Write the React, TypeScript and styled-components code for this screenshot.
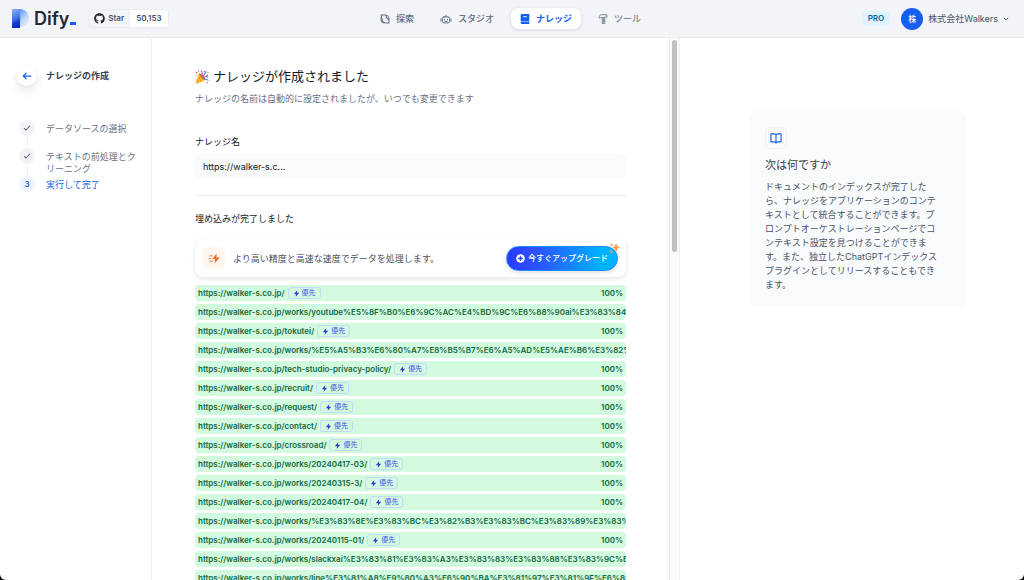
import React from "react";
import styled, { createGlobalStyle } from "styled-components";
import { FaGithub } from "react-icons/fa";

const GlobalStyle = createGlobalStyle`
  *, *::before, *::after { box-sizing: border-box; }
  body {
    margin: 0;
    background: #101010;
    font-family: Inter, "Noto Sans CJK JP", sans-serif;
    font-size: 9px;
    line-height: 13px;
    color: #344054;
  }
  button, input { font: inherit; color: inherit; }
  h1, h2, p, ol, ul { margin: 0; padding: 0; }
  ol, ul { list-style: none; }
  svg { display: block; flex: none; }
`;

const Page = styled.div`
  display: flex;
  flex-direction: column;
  height: 100vh;
  overflow: hidden;
  background: #fff;
  border-radius: 0 0 6px 6px;
`;

const Header = styled.header`
  display: grid;
  grid-template-columns: 1fr auto 1fr;
  align-items: center;
  flex: none;
  height: 38px;
  padding: 0 15px 0 12px;
  background: #f2f4f7;
  border-bottom: 1px solid #eaecf0;
`;

const HeaderSide = styled.div<{ $end?: boolean }>`
  display: flex;
  align-items: center;
  justify-content: ${(p) => (p.$end ? "flex-end" : "flex-start")};
`;

const Brand = styled.a`
  display: flex;
  align-items: center;
  gap: 5px;
  margin-right: 12px;
  color: #1d2939;
  font-size: 18px;
  font-weight: 600;
  line-height: 20px;
  text-decoration: none;
`;

const Wordmark = styled.span`
  display: flex;
  align-items: baseline;
  gap: 1px;
`;

const Underscore = styled.span`
  width: 6px;
  height: 3px;
  background: #155eef;
`;

const StarBadge = styled.a`
  display: flex;
  height: 19px;
  overflow: hidden;
  border: 1px solid #eaecf0;
  border-radius: 4px;
  color: #475467;
  font-size: 8px;
  font-weight: 600;
  line-height: 17px;
  text-decoration: none;
`;

const StarLabel = styled.span`
  display: flex;
  align-items: center;
  gap: 3px;
  padding: 0 6px 0 5px;
`;

const StarCount = styled.span`
  padding: 0 6px;
  background: #fff;
`;

const Nav = styled.nav`
  display: flex;
  gap: 8px;
`;

const NavLink = styled.a<{ $active?: boolean; $muted?: boolean }>`
  display: flex;
  align-items: center;
  gap: 6px;
  height: 21px;
  padding: 0 9px;
  border-radius: 8px;
  font-weight: ${(p) => (p.$active ? 700 : 500)};
  color: ${(p) => (p.$active ? "#155eef" : p.$muted ? "#7d8797" : "#667085")};
  background: ${(p) => (p.$active ? "#fff" : "transparent")};
  box-shadow: ${(p) => (p.$active ? "0 1px 4px rgba(16, 24, 40, 0.12)" : "none")};
  text-decoration: none;
`;

const Plan = styled.span`
  padding: 1px 6px;
  margin-right: 11px;
  border-radius: 4px;
  background: #e0f2fe;
  color: #026aa2;
  font-size: 8px;
  font-weight: 600;
`;

const Account = styled.button`
  display: flex;
  align-items: center;
  gap: 5px;
  padding: 0;
  border: 0;
  background: none;
  color: #475467;
`;

const Avatar = styled.span`
  width: 22px;
  height: 22px;
  border-radius: 50%;
  background: #155eef;
  color: #fff;
  font-size: 8px;
  font-weight: 500;
  line-height: 22px;
`;

const Body = styled.div`
  display: flex;
  flex: 1;
  min-height: 0;
`;

const Sidebar = styled.aside`
  flex: none;
  width: 152px;
  padding: 27px 12px 0 16px;
  border-right: 1px solid #eaecf0;
`;

const SidebarTitle = styled.div`
  display: flex;
  align-items: center;
  gap: 9px;
  margin-bottom: 34px;
  font-weight: 700;
`;

const BackButton = styled.button`
  display: grid;
  place-items: center;
  width: 21px;
  height: 21px;
  padding: 0;
  border: 0;
  border-radius: 50%;
  background: #fff;
  box-shadow: 0 6px 10px rgba(16, 24, 40, 0.08), 0 1px 3px rgba(16, 24, 40, 0.06);
`;

const StepList = styled.ol`
  display: flex;
  flex-direction: column;
`;

const Step = styled.li<{ $active?: boolean }>`
  display: flex;
  gap: 11px;
  min-height: 28px;
  padding-left: 3px;
  line-height: 12px;
  color: ${(p) => (p.$active ? "#155eef" : "#667085")};
`;

const StepRail = styled.span`
  display: flex;
  flex-direction: column;
  align-items: center;
  gap: 2px;
  padding-bottom: 2px;
`;

const StepMark = styled.span<{ $active?: boolean }>`
  display: grid;
  place-items: center;
  flex: none;
  width: 16px;
  height: 16px;
  border-radius: 50%;
  background: ${(p) => (p.$active ? "#eff4ff" : "#f2f4f7")};
  font-size: 8px;
  font-weight: 600;
`;

const StepLine = styled.span`
  flex: 1;
  width: 1px;
  background: #eaecf0;
`;

const StepText = styled.span`
  padding-top: 3px;
`;

const Main = styled.main`
  flex: 1;
  min-width: 0;
  padding: 29px 43px 0;
  overflow: hidden;
`;

const TitleRow = styled.div`
  display: flex;
  align-items: center;
  gap: 4px;
  margin-bottom: 6px;
`;

const Title = styled.h1`
  color: #101828;
  font-size: 13px;
  font-weight: 400;
  line-height: 19px;
`;

const Subtitle = styled.p`
  margin-bottom: 30px;
  color: #667085;
`;

const FieldLabel = styled.label`
  display: block;
  margin-bottom: 6px;
  color: #101828;
`;

const NameInput = styled.input`
  display: block;
  width: 100%;
  height: 25px;
  margin-bottom: 16px;
  padding: 0 8px;
  border: 0;
  border-radius: 5px;
  outline: 0;
  background: #f9fafb;
  color: #101828;
`;

const EmbedSection = styled.section`
  padding-top: 16px;
  border-top: 1px solid #eaecf0;
`;

const SectionTitle = styled.h2`
  margin-bottom: 14px;
  color: #101828;
  font-size: 9px;
  font-weight: 400;
`;

const UpgradeCard = styled.div`
  display: flex;
  align-items: center;
  height: 38px;
  margin-bottom: 8px;
  padding: 0 8px;
  border-radius: 8px;
  background: #fff;
  box-shadow: 0 2px 5px rgba(16, 24, 40, 0.1), 0 0 1px rgba(16, 24, 40, 0.06);
`;

const UpgradeIcon = styled.span`
  display: grid;
  place-items: center;
  width: 22px;
  height: 22px;
  margin-right: 8px;
  border-radius: 5px;
  background: #fff6ed;
`;

const UpgradeText = styled.p`
  flex: 1;
  color: #475467;
`;

const UpgradeButton = styled.button`
  position: relative;
  display: flex;
  align-items: center;
  gap: 3px;
  height: 25px;
  padding: 0 9px;
  border: 1px solid #1a8cff;
  border-radius: 13px;
  background: linear-gradient(90deg, #2b3bff 0%, #2b55ff 30%, #00b2ff 85%);
  box-shadow: 0 2px 4px rgba(16, 24, 40, 0.12);
  color: #fff;
  font-size: 8px;
  font-weight: 500;
`;

const Sparkle = styled.svg`
  position: absolute;
  top: -4px;
  right: -3px;
`;

const FileList = styled.ul`
  display: flex;
  flex-direction: column;
  gap: 3px;
`;

const FileRow = styled.li`
  display: flex;
  align-items: center;
  gap: 3px;
  height: 16px;
  padding: 0 3px;
  overflow: hidden;
  border-radius: 4px;
  background: #d1fadf;
  color: #14693f;
  font-size: 8px;
  font-weight: 600;
  white-space: nowrap;
`;

const Priority = styled.span`
  display: flex;
  align-items: center;
  gap: 2px;
  height: 12px;
  padding: 0 4px;
  border: 1px solid #c7d7fe;
  border-radius: 3px;
  color: #444ce7;
  font-size: 7px;
  font-weight: 400;
  line-height: 10px;
`;

const Percent = styled.span`
  margin-left: auto;
`;

const ScrollRail = styled.div`
  flex: none;
  width: 11px;
  padding: 2px 2px 0 2px;
  border-left: 1px solid #ececec;
  border-right: 1px solid #f0f0f0;
  background: #fafafa;
`;

const ScrollThumb = styled.div`
  height: 212px;
  border-radius: 3px;
  background: #c1c1c1;
`;

const Aside = styled.aside`
  flex: none;
  width: 344px;
  padding: 73px 58px 0 69px;
`;

const InfoCard = styled.section`
  padding: 16px 28px 15px 16px;
  border-radius: 8px;
  background: #f9fafb;
`;

const InfoIcon = styled.span`
  display: grid;
  place-items: center;
  width: 22px;
  height: 22px;
  margin-bottom: 8px;
  border: 1px solid #eff1f4;
  border-radius: 5px;
`;

const InfoTitle = styled.h2`
  margin-bottom: 7px;
  font-size: 11px;
  font-weight: 400;
  line-height: 16px;
`;

const InfoText = styled.p`
  color: #475467;
  line-height: 14px;
`;

const Bolt = ({ size = 7, color = "#3538cd" }: { size?: number; color?: string }) => (
  <svg width={size} height={size} viewBox="0 0 12 12" fill={color}>
    <path d="M7.2.3 1.4 7.1h3.8L4.7 11.700l5.900-6.900H6.800z" />
  </svg>
);

const Check = () => (
  <svg width="8" height="8" viewBox="0 0 12 12" fill="none" stroke="#667085" strokeWidth="1.600" strokeLinecap="round" strokeLinejoin="round">
    <path d="M2 6.400 4.600 9 10 3.200" />
  </svg>
);

const LogoMark = () => (
  <svg width="17" height="19" viewBox="0 0 17 19">
    <defs>
      <linearGradient id="logoStem" x1="0.3" y1="0" x2="0.5" y2="1">
        <stop offset="0" stopColor="#7fadf5" />
        <stop offset="0.5" stopColor="#4275e2" />
        <stop offset="0.75" stopColor="#1138cf" />
        <stop offset="1" stopColor="#0a25c8" />
      </linearGradient>
      <linearGradient id="logoBowl" x1="0.300" y1="0" x2="0.900" y2="1">
        <stop offset="0" stopColor="#6d9df1" />
        <stop offset="0.500" stopColor="#bdd6fb" />
        <stop offset="1" stopColor="#f2f4f7" />
      </linearGradient>
    </defs>
    <path d="M7 0h1.500a8.500 9 0 0 1 0 18H7z" fill="url(#logoBowl)" />
    <path d="M0 0h8v19H0z" fill="url(#logoStem)" />
  </svg>
);

const ExploreIcon = () => (
  <svg width="10" height="10" viewBox="0 0 14 14" fill="none" stroke="currentColor" strokeWidth="1.500" strokeLinejoin="round" strokeLinecap="round">
    <path d="M1.500 1.500h5.500a5.500 5.500 0 0 1 5.500 5.500v5.500H8A5 5 0 0 1 3 7.500z" />
    <path d="M1.500 5v2.500a5 5 0 0 0 4 5M8.500 1.800c0 3 1 4.700 3.800 6" />
  </svg>
);

const StudioIcon = () => (
  <svg width="12" height="10" viewBox="0 0 16 14" fill="none" stroke="currentColor" strokeWidth="1.400" strokeLinecap="round">
    <rect x="3" y="4" width="10" height="8.500" rx="2.200" />
    <path d="M8 4V1.500M1 7v3M15 7v3M6 7.300v1M10 7.300v1M6.500 10.400h3" />
  </svg>
);

const KnowledgeIcon = () => (
  <svg width="10" height="10" viewBox="0 0 14 14">
    <path d="M2.500 0H13v10H1V1.500A1.500 1.500 0 0 1 2.500 0zM1 11h12v3H2.500A1.500 1.500 0 0 1 1 12.500z" fill="currentColor" />
    <path d="M4.500 3.800h5" stroke="#fff" strokeWidth="1.300" />
  </svg>
);

const ToolIcon = () => (
  <svg width="10" height="10" viewBox="0 0 14 14" fill="none" stroke="currentColor" strokeWidth="1.400" strokeLinejoin="round">
    <path d="M1.500 4C2 2 3.200 1 5 1h7.500v3.500h-2L9.500 4v9.300H6V5H3.500L2.500 6z" />
    <path d="M6 5h3.500M7.800 6v6" />
  </svg>
);

const PartyIcon = () => (
  <svg width="14" height="14" viewBox="0 0 28 28">
    <path d="M8 7 1 26c0 1.500 1 2 2 1.500L21 20z" fill="#fdbb35" />
    <path d="m6 12 7 12M3.500 19l4.500 7M8 8l10 13" stroke="#e58a14" strokeWidth="1.600" />
    <path d="M8 7c4-1 14 9 13 13-3 1-13-8-13-13z" fill="#b97716" />
    <path d="M12 12c4-3 3-7 0-11M16 17c4-5 6-3 10-7" fill="none" stroke="#df4ca8" strokeWidth="2.400" />
    <path d="M14 14c5-3 5-8 9-11M18 19c4-2 6 0 9 2" fill="none" stroke="#548ee7" strokeWidth="2.200" />
    <g fill="#e94b55"><circle cx="3" cy="5" r="1.700" /><circle cx="19" cy="3" r="1.500" /><circle cx="24" cy="25" r="1.500" /></g>
    <g fill="#7b68dc"><circle cx="7" cy="1.800" r="1.500" /><circle cx="25" cy="14" r="1.500" /></g>
    <g fill="#f6a72d"><circle cx="26" cy="5" r="1.700" /><circle cx="1.800" cy="11" r="1.300" /></g>
  </svg>
);

const files: { url: string; long?: boolean }[] = [
  { url: "/" },
  { url: "/works/youtube%E5%8F%B0%E6%9C%AC%E4%BD%9C%E6%88%90ai%E3%83%84%E3%83%BC%E3%83%AB/", long: true },
  { url: "/tokutei/" },
  { url: "/works/%E5%A5%B3%E6%80%A7%E8%B5%B7%E6%A5%AD%E5%AE%B6%E3%82%B3%E3%83%9F%E3%83%A5/", long: true },
  { url: "/tech-studio-privacy-policy/" },
  { url: "/recruit/" },
  { url: "/request/" },
  { url: "/contact/" },
  { url: "/crossroad/" },
  { url: "/works/20240417-03/" },
  { url: "/works/20240315-3/" },
  { url: "/works/20240417-04/" },
  { url: "/works/%E3%83%8E%E3%83%BC%E3%82%B3%E3%83%BC%E3%83%89%E3%83%84%E3%83%BC%E3%83%AB/", long: true },
  { url: "/works/20240115-01/" },
  { url: "/works/slackxai%E3%83%81%E3%83%A3%E3%83%83%E3%83%88%E3%83%9C%E3%83%83%E3%83%88/", long: true },
  { url: "/works/line%E3%81%A8%E9%80%A3%E6%90%BA%E3%81%97%E3%81%9F%E6%89%8B%E8%BB%BD/", long: true },
];

export default function App() {
  return (
    <>
      <GlobalStyle />
      <Page>
        <Header>
          <HeaderSide>
            <Brand href="#">
              <LogoMark />
              <Wordmark>Dify<Underscore /></Wordmark>
            </Brand>
            <StarBadge href="#">
              <StarLabel><FaGithub size={11} color="#24292f" />Star</StarLabel>
              <StarCount>50,153</StarCount>
            </StarBadge>
          </HeaderSide>
          <Nav>
            <NavLink href="#"><ExploreIcon />探索</NavLink>
            <NavLink href="#"><StudioIcon />スタジオ</NavLink>
            <NavLink href="#" $active><KnowledgeIcon />ナレッジ</NavLink>
            <NavLink href="#" $muted><ToolIcon />ツール</NavLink>
          </Nav>
          <HeaderSide $end>
            <Plan>PRO</Plan>
            <Account type="button">
              <Avatar>株</Avatar>
              株式会社Walkers
              <svg width="6" height="6" viewBox="0 0 10 10" fill="none" stroke="#475467" strokeWidth="1.600"><path d="m1.500 3 3.500 3.500L8.500 3" /></svg>
            </Account>
          </HeaderSide>
        </Header>
        <Body>
          <Sidebar>
            <SidebarTitle>
              <BackButton type="button" aria-label="戻る">
                <svg width="10" height="10" viewBox="0 0 12 12" fill="none" stroke="#155eef" strokeWidth="1.500" strokeLinecap="round" strokeLinejoin="round"><path d="M10.500 6h-9M5 2.500 1.500 6 5 9.500" /></svg>
              </BackButton>
              ナレッジの作成
            </SidebarTitle>
            <StepList>
              <Step>
                <StepRail><StepMark><Check /></StepMark><StepLine /></StepRail>
                <StepText>データソースの選択</StepText>
              </Step>
              <Step>
                <StepRail><StepMark><Check /></StepMark><StepLine /></StepRail>
                <StepText>テキストの前処理とクリーニング</StepText>
              </Step>
              <Step $active>
                <StepRail><StepMark $active>3</StepMark></StepRail>
                <StepText>実行して完了</StepText>
              </Step>
            </StepList>
          </Sidebar>
          <Main>
            <TitleRow>
              <PartyIcon />
              <Title>ナレッジが作成されました</Title>
            </TitleRow>
            <Subtitle>ナレッジの名前は自動的に設定されましたが、いつでも変更できます</Subtitle>
            <FieldLabel htmlFor="knowledge-name">ナレッジ名</FieldLabel>
            <NameInput id="knowledge-name" defaultValue="https://walker-s.c..." />
            <EmbedSection>
              <SectionTitle>埋め込みが完了しました</SectionTitle>
              <UpgradeCard>
                <UpgradeIcon>
                  <svg width="12" height="11" viewBox="0 0 16 14" fill="#ff6221">
                    <path d="M11.500.3 5.800 7.700h3.700l-.7 6L15.500 5.800h-4.300z" />
                    <path d="M2 3.500h4.500M.8 7h3M2 10.500h4.500" stroke="#ff8a4d" strokeWidth="1.500" />
                  </svg>
                </UpgradeIcon>
                <UpgradeText>より高い精度と高速な速度でデータを処理します。</UpgradeText>
                <UpgradeButton type="button">
                  <svg width="9" height="9" viewBox="0 0 14 14">
                    <circle cx="7" cy="7" r="6.700" fill="#fff" />
                    <path d="M7 3.200 8 6l2.800 1L8 8l-1 2.800L6 8 3.200 7 6 6z" fill="#2b4bff" stroke="#2b4bff" strokeWidth="1.200" strokeLinejoin="round" />
                  </svg>
                  今すぐアップグレード
                  <Sparkle width="11" height="11" viewBox="0 0 14 14" fill="#fba052">
                    <path d="m9 0 1.700 4L14 5.500 10.700 7.200 9 12 7.300 7.200 4 5.500 7.300 4zM3 8l.9 2.100L6 11l-2.100.9L3 14l-.9-2.100L0 11l2.100-.9zM3.500 0l.7 1.600L6 2.500l-1.800.8L3.500 5l-.7-1.700L1 2.500l1.800-.9z" />
                  </Sparkle>
                </UpgradeButton>
              </UpgradeCard>
              <FileList>
                {files.map((f) => (
                  <FileRow key={f.url}>
                    <span>https://walker-s.co.jp{f.url}</span>
                    {!f.long && (
                      <>
                        <Priority><Bolt />優先</Priority>
                        <Percent>100%</Percent>
                      </>
                    )}
                  </FileRow>
                ))}
              </FileList>
            </EmbedSection>
          </Main>
          <ScrollRail><ScrollThumb /></ScrollRail>
          <Aside>
            <InfoCard>
              <InfoIcon>
                <svg width="12" height="11" viewBox="0 0 14 13" fill="none" stroke="#155eef" strokeWidth="1.300" strokeLinejoin="round">
                  <path d="M7 2.500C6.500 1.400 5.500 1 4.500 1H1v9.500h3.500c1 0 2 .3 2.500 1.500.5-1.200 1.500-1.500 2.500-1.500H13V1H9.500C8.500 1 7.500 1.400 7 2.500zM7 2.500V12" />
                </svg>
              </InfoIcon>
              <InfoTitle>次は何ですか</InfoTitle>
              <InfoText>ドキュメントのインデックスが完了したら、ナレッジをアプリケーションのコンテキストとして統合することができます。プロンプトオーケストレーションページでコンテキスト設定を見つけることができます。また、独立したChatGPTインデックスプラグインとしてリリースすることもできます。</InfoText>
            </InfoCard>
          </Aside>
        </Body>
      </Page>
    </>
  );
}
